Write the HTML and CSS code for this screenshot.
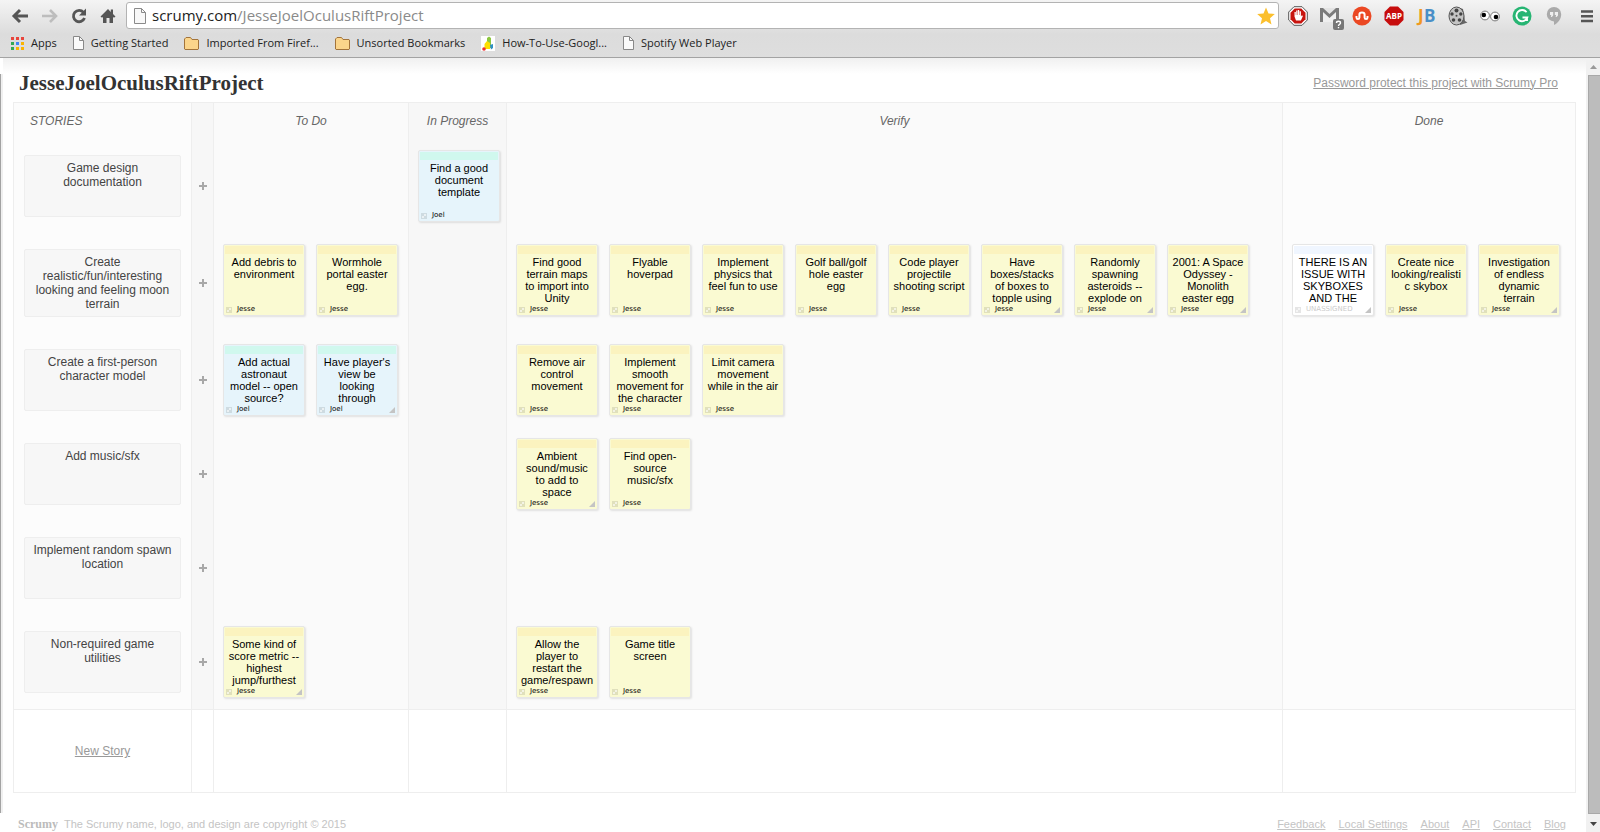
FILE: index.html
```html
<!DOCTYPE html>
<html lang="en">
<head>
<meta charset="utf-8">
<title>JesseJoelOculusRiftProject</title>
<link rel="stylesheet" href="styles.css">
</head>
<body>
<header class="chrome">
  <div class="toolbar">
    <nav class="nav-buttons" aria-label="Navigation">
      <button class="nav-button" aria-label="Back"><svg width="18" height="16" viewBox="0 0 18 16"><path d="M2 8h14M8 2 2 8l6 6" fill="none" stroke="#555" stroke-width="3"/></svg></button>
      <button class="nav-button" aria-label="Forward"><svg width="18" height="16" viewBox="0 0 18 16"><path d="M1 8h14M9 2l6 6-6 6" fill="none" stroke="#bdbdbd" stroke-width="2.600"/></svg></button>
      <button class="nav-button" aria-label="Reload"><svg width="18" height="16" viewBox="0 0 18 16"><path d="M13.500 4.300A5.700 5.700 0 1 0 14.500 10" fill="none" stroke="#555" stroke-width="2.800"/><path d="M16 .5v7H9z" fill="#555"/></svg></button>
      <button class="nav-button" aria-label="Home"><svg width="18" height="16" viewBox="0 0 18 16"><path d="M9 1 1.500 8.500 3 9.800l1-.9V15h3.500v-5h3v5H14V8.900l1 .9 1.500-1.300L14 6V1.500h-2.200V4z" fill="#555"/></svg></button>
    </nav>
    <div class="address">
      <svg class="page-icon" width="12" height="16" viewBox="0 0 12 16"><path d="M.5.5h7l4 4v11H.5z" fill="#f8f8f8" stroke="#8a8a8a"/><path d="M7.500.5v4h4" fill="none" stroke="#8a8a8a"/></svg>
      <div class="url" role="textbox" aria-label="Address" tabindex="0"><span class="host">scrumy.com</span>/JesseJoelOculusRiftProject</div>
      <button class="star" aria-label="Bookmark this page"><svg width="18" height="18" viewBox="0 0 18 18"><path d="M9 .5l2.500 6 6.300.5-4.800 4.200 1.500 6.300L9 14.100l-5.500 3.400L5 11.200.2 7l6.300-.5z" fill="#fbbf2d"/></svg></button>
    </div>
    <div class="extensions">
      <button class="ext" aria-label="AdBlock"><svg width="20" height="20" viewBox="0 0 20 20"><path d="M6 .7h8L19.300 6v8L14 19.300H6L.7 14V6z" fill="#fff" stroke="#555"/><path d="M6.700 2.500h6.600l4.200 4.200v6.600l-4.200 4.200H6.700l-4.200-4.200V6.700z" fill="#c8150f"/><path d="M6.500 10.500V6h1.300v3h.4V4.600h1.300V9h.4V4h1.300v5h.4V5.200h1.300v5.300l1-1.200 1 .6-2 4.600H8z" fill="#fff"/></svg></button>
      <button class="ext" aria-label="Gmail"><svg width="24" height="24" viewBox="0 0 24 24"><path d="M0 2h19v14H0z" fill="#7b7b7b"/><path d="M3 2h13l-6.500 6z" fill="#e4e4e4"/><path d="M3 16V6l6.500 6L16 6v10z" fill="#efefef"/><rect x="13" y="13" width="11" height="11" rx="2" fill="#777"/><path d="M16.500 17c0-2.300 4-2.300 4 0 0 1.300-2 1.200-2 3M18.500 21v1.200" fill="none" stroke="#fff" stroke-width="1.400"/></svg></button>
      <button class="ext" aria-label="StumbleUpon"><svg width="20" height="20" viewBox="0 0 20 20"><circle cx="10" cy="10" r="9.500" fill="#eb4823"/><path d="M4.500 10v1.600c0 2 2.900 2 2.900 0V8.400c0-2.600 5.200-2.600 5.200 0v3.200c0 2 2.900 2 2.900 0V10" fill="none" stroke="#fff" stroke-width="2"/></svg></button>
      <button class="ext" aria-label="Adblock Plus"><svg width="20" height="20" viewBox="0 0 20 20"><path d="M6 .5h8L19.500 6v8L14 19.500H6L.5 14V6z" fill="#c70d0d"/><text x="10" y="13" class="abp">ABP</text></svg></button>
      <button class="ext" aria-label="JB"><svg width="20" height="20" viewBox="0 0 20 20"><text x="2" y="16" class="jb jb-j">J</text><text x="8" y="16" class="jb jb-b">B</text></svg></button>
      <button class="ext" aria-label="Film reel"><svg width="20" height="20" viewBox="0 0 20 20"><path d="M9 1l6 2 2 12 2.500 1.500L12 19z" fill="#666"/><ellipse cx="8.500" cy="10" rx="7.500" ry="9" fill="#c4c4c4" stroke="#555"/><g fill="#444"><circle cx="8.500" cy="4.500" r="2"/><circle cx="4" cy="8" r="1.700"/><circle cx="12.800" cy="8" r="1.700"/><circle cx="5.500" cy="14" r="1.800"/><circle cx="11.500" cy="14" r="1.800"/><circle cx="8.500" cy="9.700" r="1"/></g></svg></button>
      <button class="ext" aria-label="Eyes"><svg width="20" height="20" viewBox="0 0 20 20"><circle cx="5" cy="9.500" r="4.400" fill="#fff" stroke="#777"/><circle cx="15" cy="10.500" r="4.400" fill="#fff" stroke="#777"/><circle cx="3.800" cy="9" r="2.300"/><circle cx="16" cy="11" r="2.300"/></svg></button>
      <button class="ext" aria-label="Grammarly"><svg width="20" height="20" viewBox="0 0 20 20"><circle cx="10" cy="10" r="9.500" fill="#27b573"/><path d="M14.500 6.200A5.600 5.600 0 1 0 15.300 11.500H10.500M15 11v4" fill="none" stroke="#fff" stroke-width="1.900"/></svg></button>
      <button class="ext" aria-label="Hangouts"><svg width="20" height="20" viewBox="0 0 20 20"><path d="M10 1a7.200 7.200 0 0 0 0 14.400V19c4-2 7.200-6 7.200-10.800A7.200 7.200 0 0 0 10 1z" fill="#aaa"/><path d="M6 6h3.200v3.500L7.800 11H6.800L7.300 9H6zM10.800 6H14v3.500L12.600 11h-1l.5-2h-1.300z" fill="#eee"/></svg></button>
    </div>
    <button class="menu" aria-label="Menu"><svg width="14" height="14" viewBox="0 0 14 14"><path d="M1 2.500h12M1 7.200h12M1 12h12" stroke="#555" stroke-width="2.600"/></svg></button>
  </div>
  <nav class="bookmarks" aria-label="Bookmarks">
    <a href="#" class="bookmark"><svg width="13" height="13" viewBox="0 0 13 13"><path d="M0 0h3v3H0zM5 0h3v3H5zM10 0h3v3h-3z" fill="#e8453c"/><path d="M0 5h3v3H0zM0 10h3v3H0z" fill="#34a853"/><path d="M5 5h3v3H5z" fill="#4285f4"/><path d="M10 5h3v3h-3zM5 10h3v3H5zM10 10h3v3h-3z" fill="#fbb400"/></svg>Apps</a>
    <a href="#" class="bookmark"><svg width="11" height="14" viewBox="0 0 11 14"><path d="M.5.5h6l4 4v9H.5z" fill="#fafafa" stroke="#888"/><path d="M6.500.5v4h4" fill="none" stroke="#888"/></svg>Getting Started</a>
    <a href="#" class="bookmark"><svg width="15" height="13" viewBox="0 0 15 13"><path d="M.5 12V2L2 .5h4.500L8 2.500h6l.5.5v9l-.5.500H1z" fill="#fbd58b" stroke="#a3743b"/></svg>Imported From Firef...</a>
    <a href="#" class="bookmark"><svg width="15" height="13" viewBox="0 0 15 13"><path d="M.5 12V2L2 .5h4.500L8 2.500h6l.5.5v9l-.5.500H1z" fill="#fbd58b" stroke="#a3743b"/></svg>Unsorted Bookmarks</a>
    <a href="#" class="bookmark"><svg width="14" height="15" viewBox="0 0 14 15"><path d="M0 0h14v15H0z" fill="#fff"/><path d="M6 2l2-1.500L10 2v10H6z" fill="#8cc63f"/><path d="M3.500 8l2.500-3 3 2v6H3.500z" fill="#fde000"/><path d="M9 9l3-1v4l-2 1.500z" fill="#2f8fc4"/><circle cx="3" cy="13" r="1.800" fill="#e33"/></svg>How-To-Use-Googl...</a>
    <a href="#" class="bookmark"><svg width="11" height="14" viewBox="0 0 11 14"><path d="M.5.5h6l4 4v9H.5z" fill="#fafafa" stroke="#888"/><path d="M6.500.5v4h4" fill="none" stroke="#888"/></svg>Spotify Web Player</a>
  </nav>
</header>
<div class="viewport">
  <div class="window-edge"></div>
  <main class="page">
    <div class="page-head">
      <h1 class="title">JesseJoelOculusRiftProject</h1>
      <a href="#" class="pro-link">Password protect this project with Scrumy Pro</a>
    </div>
    <table class="board">
      <colgroup><col class="col-story"><col class="col-add"><col class="col-todo"><col class="col-progress"><col><col class="col-done"></colgroup>
      <thead><tr><th class="stories">STORIES</th><th class="shade"></th><th>To Do</th><th class="shade">In Progress</th><th>Verify</th><th class="light">Done</th></tr></thead>
      <tbody id="rows"></tbody>
      <tfoot><tr><td class="new-story"><a href="#">New Story</a></td><td></td><td></td><td></td><td></td><td></td></tr></tfoot>
    </table>
    <footer class="footer">
      <span class="brand">Scrumy</span>
      <span>The Scrumy name, logo, and design are copyright © 2015</span>
      <nav class="footer-links" aria-label="Footer"><a href="#">Feedback</a><a href="#">Local Settings</a><a href="#">About</a><a href="#">API</a><a href="#">Contact</a><a href="#">Blog</a></nav>
    </footer>
  </main>
  <div class="scrollbar">
    <svg width="14" height="17" viewBox="0 0 14 17"><path d="M4 11h7L7.500 7z" fill="#999"/></svg>
    <div class="thumb"></div>
    <svg width="14" height="18" viewBox="0 0 14 18"><path d="M4 8h7l-3.500 4z" fill="#444"/></svg>
  </div>
</div>
<script src="board.js"></script>
</body>
</html>
```
FILE: styles.css
```css
* { box-sizing: border-box; }
body {
  margin: 0;
  min-height: 100vh;
  display: flex;
  flex-direction: column;
  font-family: "Liberation Sans", Arial, sans-serif;
  background: #fff;
  color: #333;
}
button { border: 0; padding: 0; background: none; font: inherit; color: inherit; }
svg { display: block; flex: none; overflow: visible; }

.chrome {
  height: 58px;
  background: linear-gradient(#f4f4f4, #dcdcdc 60%, #dedede);
  border-bottom: 1px solid #a3a3a3;
  font-family: "Open Sans", "Noto Sans", sans-serif;
}
.toolbar { display: flex; align-items: center; height: 30px; padding: 1px 6px 0 12px; }
.nav-buttons { display: flex; gap: 11px; width: 114px; }
.address {
  flex: 1;
  display: flex;
  align-items: center;
  height: 27px;
  padding: 0 3px 0 7px;
  background: #fff;
  border: 1px solid #b3b3b3;
  border-radius: 3px;
}
.url { flex: 1; margin-left: 6px; padding-bottom: 1px; font-size: 15px; line-height: 22px; color: #8a8a8a; white-space: nowrap; }
.host { color: #222; }
.extensions { display: flex; gap: 12px; margin-left: 9px; }
.ext { display: flex; align-items: flex-start; width: 20px; height: 20px; }
.menu { margin-left: 16px; }
.abp { font: bold 8px "Open Sans", sans-serif; fill: #fff; text-anchor: middle; }
.jb { font: bold 17px "Open Sans", sans-serif; }
.jb-j { fill: #f0991f; }
.jb-b { fill: #4a8fc7; }
.bookmarks { display: flex; gap: 16px; padding: 3px 11px; font-size: 11px; line-height: 20px; }
.bookmark { display: flex; align-items: center; gap: 7px; color: #222; text-decoration: none; white-space: nowrap; }

.viewport { flex: 1; display: flex; }
.window-edge { width: 3px; margin: 16px 0 19px; background: #f0f0f0; border-left: 1px solid #a3a3a3; }
.page {
  flex: 1;
  padding: 0 10px;
  background: linear-gradient(#f0f0f0, #fff 16px);
}
.page-head { display: flex; align-items: center; justify-content: space-between; height: 44px; padding: 5px 18px 0 6px; }
.title { margin: 0; font: bold 21px/28px "Liberation Serif", serif; color: #333; }
.pro-link { font-size: 12px; line-height: 16px; color: #999; }

.board {
  width: 100%;
  table-layout: fixed;
  border-collapse: separate;
  border-spacing: 0;
  border: 1px solid #eee;
  border-left: 0;
}
.col-story { width: 178px; }
.col-add { width: 22px; }
.col-todo { width: 195px; }
.col-progress { width: 98px; }
.col-done { width: 293px; }
.board th, .board td { padding: 0; border-left: 1px solid #eee; background: #fafafa; }
.board th { height: 36px; font-size: 12px; line-height: 16px; font-weight: normal; font-style: italic; color: #666; vertical-align: top; padding-top: 10px; }
.board .stories { text-align: left; padding-left: 16px; }
.board .stories, .board .light { background: #fcfcfc; }
.board .shade { background: #f7f7f7; }
.story-cell { vertical-align: middle; }
.story {
  margin: 16px 10px;
  min-height: 62px;
  padding: 5px 6px;
  border: 1px solid #eee;
  border-radius: 2px;
  background: #f7f7f7;
  font-size: 12px;
  line-height: 14px;
  text-align: center;
  color: #444;
}
.add { display: block; width: 21px; height: 20px; }
.add svg { margin: 0 auto; }
.board .notes { vertical-align: top; padding: 11px 0 0 9px; }
.note-list { display: flex; flex-wrap: wrap; gap: 11px; }
.note {
  display: flex;
  flex-direction: column;
  width: 82px;
  height: 72px;
  padding: 1px;
  border: 1px solid #e6e6e6;
  border-radius: 2px;
  background: #fafad2;
  box-shadow: 1px 1px 2px rgba(0, 0, 0, .1);
}
.note::before { content: ""; height: 8px; flex: none; background: #fbf3bf; }
.note.joel { background: #e6f4fb; }
.note.joel::before { background: #d0f8ee; }
.note.unassigned { background: #fff; }
.note.unassigned::before { background: #f0f6ff; }
.note-text { flex: none; height: 51px; margin: 0; padding: 2px 2px 0; overflow: hidden; font-size: 11px; line-height: 12px; text-align: center; color: #000; overflow-wrap: break-word; white-space: pre-line; }
.note-foot { display: flex; flex: none; align-items: center; height: 9px; padding: 0 1px; font: 7px/9px "DejaVu Sans", sans-serif; color: #000; }
.note-foot svg:first-child { margin-right: 5px; }
.note-foot .fold { margin-left: auto; }
.unassigned .note-foot { color: #ccc; }
.board tfoot td { height: 83px; background: #fff; border-top: 1px solid #eee; }
.new-story { text-align: center; font-size: 12px; }
.new-story a { color: #999; }

.footer { display: flex; align-items: center; gap: 6px; margin-top: 24px; padding: 0 10px 0 5px; font-size: 11px; line-height: 14px; color: #c4c4c4; }
.brand { font: bold 12px/14px "Liberation Serif", serif; color: #bbb; }
.footer-links { display: flex; gap: 13px; margin-left: auto; }
.footer-links a { color: #c4c4c4; }

.scrollbar { width: 14px; display: flex; flex-direction: column; background: #f1f1f1; }
.thumb { flex: 1; margin-left: 2px; background: #bcbcbc; border: 1px solid #a8a8a8; border-right: 0; }
```
FILE: board.js
```js
const stories = [
  { name: "Game design documentation", progress: [["Find a good document template", "Joel"]] },
  {
    name: "Create realistic/fun/interesting looking and feeling moon terrain",
    todo: [["Add debris to environment", "Jesse"], ["Wormhole portal easter egg.", "Jesse"]],
    verify: [
      ["Find good\nterrain maps\nto import into\nUnity", "Jesse"],
      ["Flyable hoverpad", "Jesse"],
      ["Implement physics that feel fun to use", "Jesse"],
      ["Golf ball/golf hole easter egg", "Jesse"],
      ["Code player projectile shooting script", "Jesse"],
      ["Have boxes/stacks of boxes to topple using", "Jesse", true],
      ["Randomly spawning asteroids -- explode on", "Jesse", true],
      ["2001: A Space Odyssey - Monolith easter egg", "Jesse", true]
    ],
    done: [
      ["THERE IS AN ISSUE WITH SKYBOXES AND THE", "UNASSIGNED", true],
      ["Create nice looking/realistic skybox", "Jesse"],
      ["Investigation\nof endless\ndynamic\nterrain", "Jesse", true]
    ]
  },
  {
    name: "Create a first-person character model",
    todo: [["Add actual astronaut model -- open source?", "Joel"], ["Have player's view be looking through", "Joel", true]],
    verify: [
      ["Remove air control movement", "Jesse"],
      ["Implement smooth movement for the character", "Jesse"],
      ["Limit camera movement while in the air", "Jesse"]
    ]
  },
  { name: "Add music/sfx", verify: [["Ambient\nsound/music\nto add to\nspace", "Jesse", true], ["Find open-source music/sfx", "Jesse"]] },
  { name: "Implement random spawn location" },
  {
    name: "Non-required game utilities",
    todo: [["Some kind of score metric -- highest jump/furthest", "Jesse", true]],
    verify: [["Allow the player to restart the game/respawn", "Jesse"], ["Game title screen", "Jesse"]]
  }
];

const boxIcon = '<svg width="6" height="6" viewBox="0 0 6 6"><path d="M0 0h6v6H0z" fill="#000" fill-opacity=".1"/><path d="M1 3h2v2H1zM3 1h2v2H3z" fill="#fff" fill-opacity=".6"/></svg>';
const foldIcon = '<svg class="fold" width="6" height="6" viewBox="0 0 6 6"><path d="M6 0v6H0z" fill="#c4c4c4"/></svg>';

const note = ([text, owner, folded]) =>
  `<article class="note ${owner.toLowerCase()}"><p class="note-text">${text}</p><div class="note-foot">${boxIcon}${owner}${folded ? foldIcon : ""}</div></article>`;

const cell = (notes = [], tone = "") =>
  `<td class="notes ${tone}"><div class="note-list">${notes.map(note).join("")}</div></td>`;

document.getElementById("rows").innerHTML = stories.map(s => `<tr>
  <td class="story-cell light"><div class="story">${s.name}</div></td>
  <td class="shade"><button class="add" aria-label="Add task"><svg width="8" height="8" viewBox="0 0 8 8"><path d="M3 0h2v3h3v2H5v3H3V5H0V3h3z" fill="#a8a8a8"/></svg></button></td>
  ${cell(s.todo)}${cell(s.progress, "shade")}${cell(s.verify)}${cell(s.done, "light")}
</tr>`).join("");
```
